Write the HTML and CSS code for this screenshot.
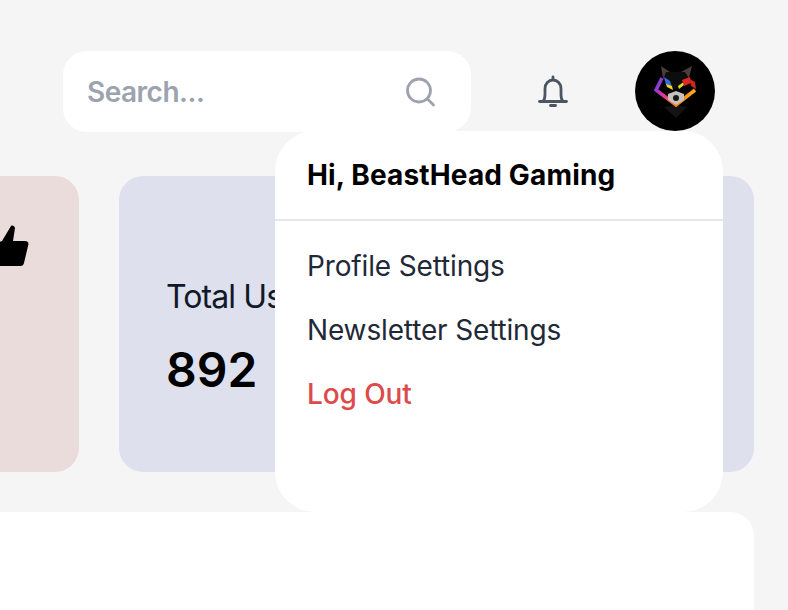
FILE: index.html
```html
<!DOCTYPE html>
<html lang="en">
<head>
<meta charset="utf-8">
<title>Dashboard</title>
<link rel="stylesheet" href="styles.css">
</head>
<body>
<div class="page">
  <header class="topbar">
    <div class="search">
      <span class="search-text">Search...</span>
      <svg class="search-icon" width="32" height="32" viewBox="0 0 32 32" fill="none" stroke="#9ca3af" stroke-width="2.8" stroke-linecap="round"><circle cx="15" cy="14.500" r="11.500"/><path d="M23.500 23l6 6"/></svg>
    </div>
    <svg class="bell" width="32" height="34" viewBox="0 0 32 34" fill="none" stroke="#4b5563" stroke-width="2.800" stroke-linecap="round" stroke-linejoin="round"><path d="M2.500 27.500h27M6 27.500c1.800-2 2-4 2-7v-6c0-4.700 3.500-8.500 8-8.500s8 3.800 8 8.500v6c0 3 .2 5 2 7"/><path d="M16 5.500V3"/><path d="M13.500 31.500h5"/></svg>
    <div class="avatar">
      <svg width="80" height="80" viewBox="0 0 80 80">
        <defs>
          <linearGradient id="band" gradientUnits="userSpaceOnUse" x1="21" y1="30" x2="60" y2="50">
            <stop offset="0" stop-color="#6d3bea"/>
            <stop offset="0.3" stop-color="#e0379b"/>
            <stop offset="0.6" stop-color="#f97316"/>
            <stop offset="1" stop-color="#fbbf24"/>
          </linearGradient>
        </defs>
        <circle cx="40" cy="40" r="40" fill="#000"/>
        <path d="M26 15l9 6h11l11-6-3 12-14 8-12-8z" fill="#4a3f3c"/>
        <path d="M31 21h19l5 8-14 9-13-9z" fill="#0d0d0d"/>
        <path d="M29 56l12 11 11-11-11-2z" fill="#131313"/>
        <path d="M27 27l-6 12 20 15 19-15" fill="none" stroke="url(#band)" stroke-width="3.600" stroke-linejoin="miter"/>
        <path d="M29 26l6 4 2 6-6-2z" fill="#2f6fe0"/>
        <path d="M31 33l6 2 1 4-6-3z" fill="#f5d90a"/>
        <path d="M43 35l7-5-1 4-5 4z" fill="#d9e021"/>
        <path d="M47 29l8-3 1 6-7 3z" fill="#e0281e"/>
        <path d="M55 28l5 3 1 7-5-3z" fill="#c9281e"/>
        <path d="M33 43l8-3 8 3 0 6-8 5-8-5z" fill="#c4c1bf"/>
        <circle cx="41" cy="47" r="3" fill="#161616"/>
      </svg>
    </div>
  </header>
  <section class="stats">
    <div class="card card-red">
      <svg class="thumb" width="38" height="42" viewBox="0 0 38 42"><path d="M0 41V19l9-3 9-15c1.500-1 3.500 0 4 2l-2 13h12c2 0 3.500 1 3.500 3L31 38c-.5 2-1.500 3-3.500 3z" fill="#000"/></svg>
    </div>
    <div class="card card-blue">
      <div class="card-label">Total Users</div>
      <div class="card-value">892</div>
    </div>
  </section>
  <section class="panel"></section>
  <nav class="menu">
    <div class="menu-head">Hi, BeastHead Gaming</div>
    <ul class="menu-list">
      <li>Profile Settings</li>
      <li>Newsletter Settings</li>
      <li class="logout">Log Out</li>
    </ul>
  </nav>
</div>
</body>
</html>
```
FILE: styles.css
```css
* { box-sizing: border-box; }
html, body { margin: 0; height: 100%; overflow: hidden; }
body { background: #f5f5f5; font-family: Inter, "Liberation Sans", sans-serif; }
.page { position: relative; width: 788px; height: 610px; overflow: hidden; padding-top: 51px; }
.topbar { display: flex; align-items: flex-start; padding-left: 63px; }
.search { width: 408px; height: 81px; background: #fff; border-radius: 24px; display: flex; align-items: center; justify-content: space-between; padding: 0 35px 0 24px; }
.search-text { font-size: 28px; font-weight: 600; letter-spacing: -0.5px; color: #9ca3af; }
.search-icon { flex: none; }
.bell { margin: 23px 0 0 66px; flex: none; }
.avatar { width: 80px; height: 80px; margin-left: 66px; flex: none; }
.avatar svg { display: block; }
.stats { display: flex; justify-content: flex-end; gap: 40px; margin-top: 44px; padding-right: 34px; height: 296px; }
.card { border-radius: 24px; height: 296px; flex: none; }
.card-red { width: 320px; background: #ebdcdc; display: flex; justify-content: flex-end; align-items: flex-start; padding: 49px 48px 0 0; }
.card-blue { width: 635px; background: #dee0ed; padding: 101px 48px 0; }
.card-label { font-size: 32px; letter-spacing: -0.9px; margin-left: -1px; color: #111827; line-height: 40px; white-space: nowrap; }
.card-value { font-size: 48px; font-weight: 600; margin-left: -1px; color: #000; line-height: 56px; margin-top: 25px; }
.panel { width: 794px; height: 200px; margin: 40px 0 0 -40px; background: #fff; border-radius: 24px; }
.menu { position: absolute; left: 275px; top: 131px; width: 448px; height: 381px; background: #fff; border-radius: 40px; }
.menu-head { height: 90px; border-bottom: 2px solid #e5e7eb; padding: 24px 32px 0; font-size: 28px; font-weight: 700; letter-spacing: 0.15px; line-height: 40px; color: #000; }
.menu-list { list-style: none; margin: 0; padding: 25px 32px 0; }
.menu-list li { font-size: 28px; letter-spacing: -0.15px; line-height: 40px; margin-bottom: 24px; color: #1f2937; }
.menu-list .logout { color: #dc4a4a; font-weight: 500; letter-spacing: -0.1px; }
```
